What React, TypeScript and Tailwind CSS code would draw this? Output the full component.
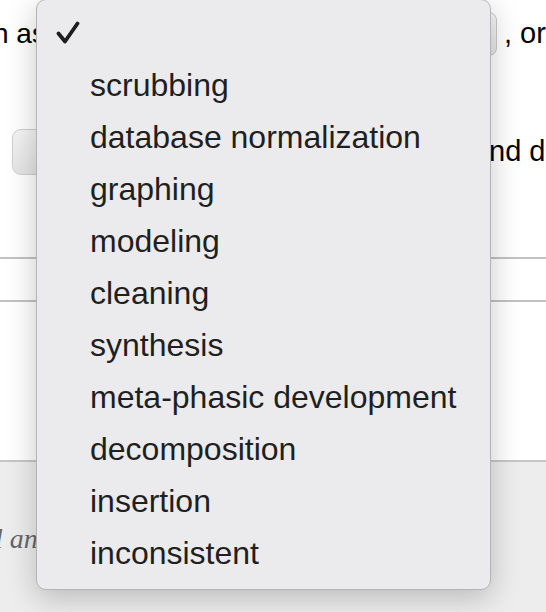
import React from 'react';

const options = [
  'scrubbing',
  'database normalization',
  'graphing',
  'modeling',
  'cleaning',
  'synthesis',
  'meta-phasic development',
  'decomposition',
  'insertion',
  'inconsistent',
];

const sans = { fontFamily: '"Liberation Sans", Arial, Helvetica, sans-serif' };

const Menu: React.FC = () => {
  return (
    <div
      className="absolute left-[36px] top-[-1px] w-[455px] h-[591px] rounded-[10px] border border-[#b4b4b6] bg-[#ebebed] shadow-[0_8px_30px_rgba(0,0,0,0.22)] pt-[7px] overflow-hidden"
      style={sans}
    >
      <div className="flex items-center h-[52px] pl-[19px]">
        <svg width="24" height="24" viewBox="0 0 24 24" className="text-[#1e1e1e]">
          <path d="M2.5 12.5 L9 20.5 L21.5 2.5" fill="none" stroke="currentColor" strokeWidth="3.8" strokeLinecap="round" strokeLinejoin="round" />
        </svg>
      </div>
      {options.map((o) => (
        <div key={o} className="flex items-center h-[52px] pl-[53px] text-[32px] leading-none text-[#1f1f1f]">
          {o}
        </div>
      ))}
    </div>
  );
};

export default function App() {
  return (
    <div className="relative w-[546px] h-[612px] overflow-hidden bg-white text-black" style={sans}>
      <div className="flex flex-col">
        <div className="flex items-center h-[68px] text-[28px] whitespace-nowrap">
          <span className="-ml-[7px] w-[59px]">n as</span>
          <div className="w-[445px] h-[44px] rounded-[8px] border border-[#c9c9c9] bg-gradient-to-b from-[#f7f7f7] to-[#e6e6e6]" />
          <span className="ml-[7px] text-[29px]">, or</span>
        </div>
        <div className="flex items-center h-[123px] pt-[44px] text-[29px] whitespace-nowrap">
          <div className="ml-[12px] w-[120px] h-[46px] rounded-[9px] border border-[#d0d0d0] bg-gradient-to-b from-[#f4f4f4] to-[#e4e4e4]" />
          <span className="ml-[357px]">nd d</span>
        </div>
        <div className="h-[66px]" />
        <div className="h-[2px] bg-[#c2c2c2]" />
        <div className="h-[41px]" />
        <div className="h-[2px] bg-[#c2c2c2]" />
        <div className="h-[158px]" />
        <div className="h-[2px] bg-[#c6c6c6]" />
        <div className="h-[150px] bg-[#ededed] pt-[56px]">
          <span
            className="-ml-[5px] italic text-[28px] text-[#666]"
            style={{ fontFamily: '"Liberation Serif", "Times New Roman", serif' }}
          >
            l and
          </span>
        </div>
      </div>
      <Menu />
    </div>
  );
}
